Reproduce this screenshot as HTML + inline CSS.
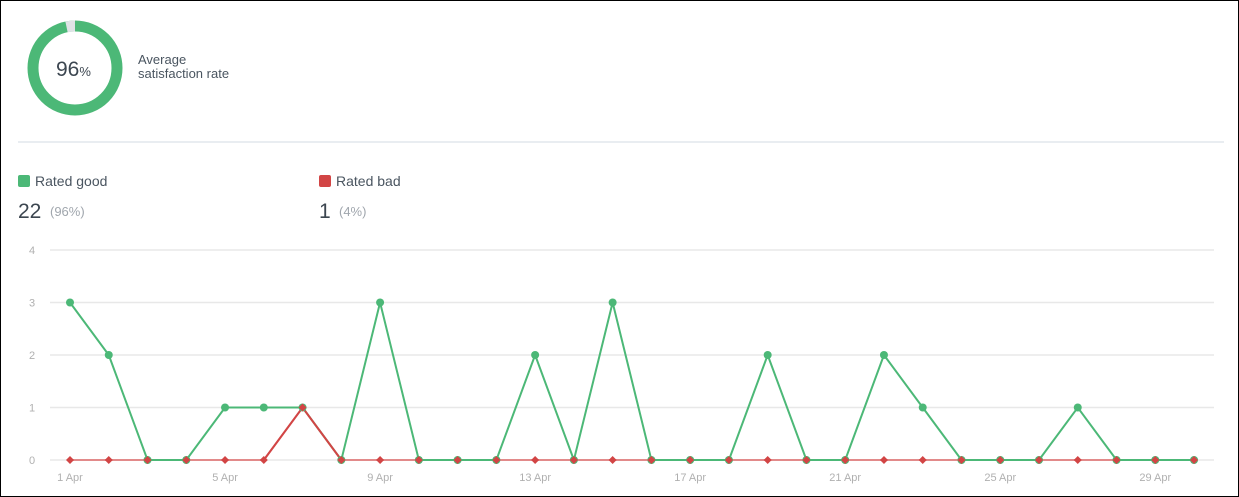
<!DOCTYPE html>
<html><head><meta charset="utf-8"><style>
html,body{margin:0;padding:0;background:#fff}
body{width:1239px;height:497px;position:relative;overflow:hidden;font-family:"Liberation Sans",sans-serif}
.frame{position:absolute;left:0;top:0;width:1237px;height:495px;border:1px solid #000}
</style></head><body>
<div class="frame"></div>
<svg width="1239" height="497" style="position:absolute;left:0;top:0" font-family="Liberation Sans, sans-serif" id="s">
<circle cx="75" cy="68" r="42" fill="none" stroke="#4cb877" stroke-width="11"/>
<path d="M66.5 26.9 A42 42 0 0 1 75 26" fill="none" stroke="#dfe3e6" stroke-width="11"/>
<text x="56" y="76" font-size="21" fill="#3c4650">96<tspan font-size="13">%</tspan></text>
<text x="138" y="64" font-size="13" fill="#4a5560">Average</text>
<text x="138" y="78" font-size="13" fill="#4a5560">satisfaction rate</text>
<line x1="18" y1="142" x2="1224" y2="142" stroke="#d3dbe3"/>
<rect x="18" y="175" width="12" height="12" rx="2" fill="#4cb877"/>
<text x="35" y="186" font-size="14" fill="#4a5560">Rated good</text>
<text x="18" y="218" font-size="21" fill="#3c4650">22</text>
<text x="50" y="216" font-size="13" fill="#a0a6ad">(96%)</text>
<rect x="319" y="175" width="12" height="12" rx="2" fill="#d24545"/>
<text x="336" y="186" font-size="14" fill="#4a5560">Rated bad</text>
<text x="319" y="218" font-size="21" fill="#3c4650">1</text>
<text x="339" y="216" font-size="13" fill="#a0a6ad">(4%)</text>
<g id="g"></g>
</svg>
<script>
var g=document.getElementById('g'),h='';
function Y(v){return 460-v*52.5}function X(d){return 70+(d-1)*38.76}
for(var i=0;i<5;i++){h+='<line x1="50" x2="1214" y1="'+Y(i)+'" y2="'+Y(i)+'" stroke="#e8e8e8" stroke-width="1.5"/><text x="32" y="'+(Y(i)+4)+'" font-size="11" fill="#b0b0b0" text-anchor="middle">'+i+'</text>';}
for(var d=1;d<=29;d+=4){h+='<text x="'+X(d)+'" y="481" font-size="11" fill="#b0b0b0" text-anchor="middle">'+d+' Apr</text>';}
var G=[3,2,0,0,1,1,1,0,3,0,0,0,2,0,3,0,0,0,2,0,0,2,1,0,0,0,1,0,0,0];
var R=[];for(var d=0;d<30;d++)R.push(d==6?1:0);
var pr='',pg='';for(var d=0;d<30;d++){pr+=(d?'L':'M')+X(d+1)+' '+Y(R[d]);pg+=(d?'L':'M')+X(d+1)+' '+Y(G[d]);}
h+='<path d="'+pr+'" fill="none" stroke="#e28a8a" stroke-width="2"/>';
h+='<path d="'+pg+'" fill="none" stroke="#4cb877" stroke-width="2"/>';
h+='<path d="M'+X(6)+' '+Y(0)+'L'+X(7)+' '+Y(1)+'L'+X(8)+' '+Y(0)+'" fill="none" stroke="#d24545" stroke-width="2"/>';
for(var d=0;d<30;d++){h+='<circle cx="'+X(d+1)+'" cy="'+Y(G[d])+'" r="4" fill="#4cb877"/>';}
for(var d=0;d<30;d++){var x=X(d+1),y=Y(R[d]);h+='<path d="M'+x+' '+(y-4)+'L'+(x+4)+' '+y+'L'+x+' '+(y+4)+'L'+(x-4)+' '+y+'Z" fill="#d24545"/>';}
g.innerHTML=h;
</script>
</body></html>
